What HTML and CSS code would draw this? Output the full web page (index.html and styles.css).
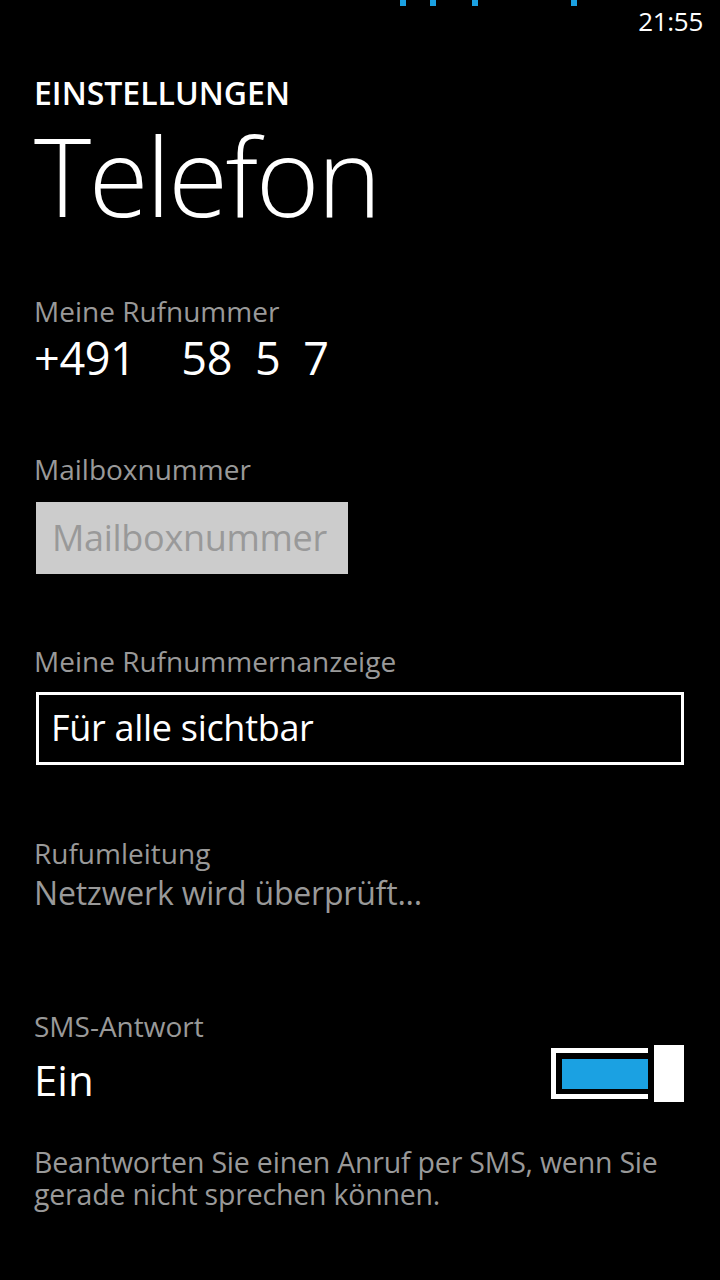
FILE: index.html
```html
<!DOCTYPE html>
<html lang="de">
<head>
<meta charset="utf-8">
<link rel="stylesheet" href="styles.css">
</head>
<body>
<div class="screen">
  <div class="statusbar">
    <div class="dots">
      <span class="dot d1"></span>
      <span class="dot d2"></span>
      <span class="dot d3"></span>
      <span class="dot d4"></span>
    </div>
    <div class="time">21:55</div>
  </div>
  <header class="title-area">
    <div class="app-title">EINSTELLUNGEN</div>
    <div class="page-title">Telefon</div>
  </header>
  <main class="content">
    <section class="group g-number">
      <div class="label">Meine Rufnummer</div>
      <div class="number">+491&nbsp;&nbsp;&nbsp;&nbsp;58&nbsp;&nbsp;5&nbsp;&nbsp;7</div>
    </section>
    <section class="group g-mailbox">
      <div class="label">Mailboxnummer</div>
      <div class="textbox">Mailboxnummer</div>
    </section>
    <section class="group g-picker">
      <div class="label">Meine Rufnummernanzeige</div>
      <div class="picker">Für alle sichtbar</div>
    </section>
    <section class="group g-forward">
      <div class="label">Rufumleitung</div>
      <div class="status">Netzwerk wird überprüft...</div>
    </section>
    <section class="group g-sms">
      <div class="label">SMS-Antwort</div>
      <div class="toggle-row">
        <div class="toggle-label">Ein</div>
        <div class="toggle">
          <div class="track"><div class="fill"></div></div>
          <div class="thumb"></div>
        </div>
      </div>
      <p class="desc">Beantworten Sie einen Anruf per SMS, wenn Sie gerade nicht sprechen können.</p>
    </section>
  </main>
</div>
</body>
</html>
```
FILE: styles.css
```css
html, body {
  margin: 0;
  padding: 0;
  background: #000;
}
body {
  width: 720px;
  height: 1280px;
  overflow: hidden;
  font-family: "Open Sans", "Noto Sans", sans-serif;
  color: #fff;
}
.screen {
  display: flex;
  flex-direction: column;
}
.statusbar {
  height: 44px;
  display: flex;
  justify-content: space-between;
  align-items: flex-start;
}
.dots {
  display: flex;
  padding-left: 400px;
}
.dot {
  width: 6px;
  height: 6px;
  background: #1ba1e2;
}
.d2 { margin-left: 24px; }
.d3 { margin-left: 36px; }
.d4 { margin-left: 93px; }
.time {
  font-size: 26px;
  line-height: 1;
  margin-top: 8px;
  margin-right: 17px;
  letter-spacing: -0.3px;
}
.title-area {
  padding-left: 34px;
}
.app-title {
  font-size: 32px;
  font-weight: 600;
  line-height: 30px;
  margin-top: 34px;
  letter-spacing: 0;
}
.page-title {
  font-size: 109px;
  font-weight: 300;
  line-height: 100px;
  margin-top: 17px;
  letter-spacing: -2.5px;
}
.content {
  padding-left: 34px;
  padding-right: 36px;
  display: flex;
  flex-direction: column;
}
.label {
  font-size: 28px;
  color: #999;
  line-height: 34px;
  letter-spacing: 0;
}
.g-number { margin-top: 69px; }
.number {
  font-size: 45px;
  line-height: 52px;
  margin-top: 4px;
  letter-spacing: -0.3px;
}
.g-mailbox { margin-top: 68px; }
.textbox {
  margin-top: 16px;
  margin-left: 2px;
  width: 312px;
  height: 72px;
  box-sizing: border-box;
  background: #cccccc;
  color: #999;
  font-size: 36px;
  line-height: 72px;
  padding-left: 16px;
  letter-spacing: -0.3px;
}
.g-picker { margin-top: 70px; }
.picker {
  margin-top: 14px;
  margin-left: 2px;
  height: 73px;
  box-sizing: border-box;
  border: 3px solid #fff;
  font-size: 36px;
  line-height: 66px;
  padding-left: 12px;
  letter-spacing: -0.3px;
}
.g-forward { margin-top: 71px; }
.status {
  font-size: 32px;
  color: #999;
  line-height: 46px;
  letter-spacing: -0.2px;
}
.g-sms { margin-top: 93px; }
.toggle-row {
  display: flex;
  justify-content: space-between;
  align-items: flex-start;
  margin-top: 2px;
}
.toggle-label {
  font-size: 42px;
  line-height: 58px;
  margin-top: 6px;
}
.toggle {
  display: flex;
  align-items: center;
  gap: 6px;
}
.track {
  width: 97px;
  height: 51px;
  box-sizing: border-box;
  border: 5px solid #fff;
  border-right: none;
  padding: 6px 0 5px 6px;
}
.fill {
  width: 86px;
  height: 30px;
  background: #1ba1e2;
}
.thumb {
  width: 30px;
  height: 57px;
  background: #fff;
}
.desc {
  margin: 37px 0 0 0;
  font-size: 28.5px;
  line-height: 32px;
  color: #999;
  letter-spacing: -0.2px;
}
```
